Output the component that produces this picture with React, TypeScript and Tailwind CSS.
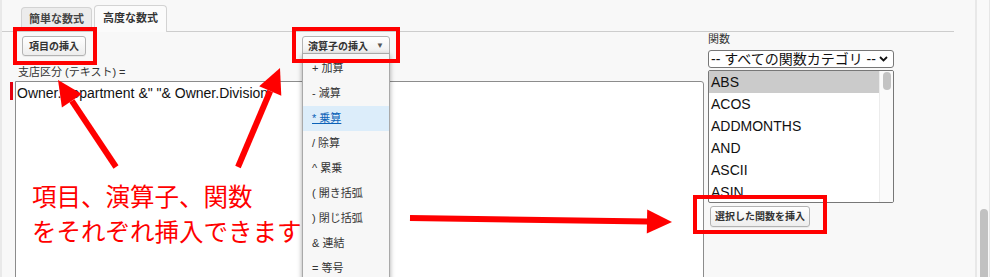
import React from 'react';

const operators = [
  '+ 加算',
  '- 減算',
  '* 乗算',
  '/ 除算',
  '^ 累乗',
  '( 開き括弧',
  ') 閉じ括弧',
  '& 連結',
  '= 等号',
];

const functions = ['ABS', 'ACOS', 'ADDMONTHS', 'AND', 'ASCII', 'ASIN'];

const font = "font-['Liberation_Sans','Noto_Sans_CJK_JP',sans-serif]";

const btn =
  'flex items-center whitespace-nowrap rounded-[3px] border border-[#b3b3b3] bg-linear-to-b from-white to-[#ededed] text-[10px] font-semibold text-[#333] shadow-[0_1px_0_rgba(0,0,0,0.05)]';

const Tabs = () => (
  <div className="flex h-[32px] w-[952px] items-end gap-[2px] border-b border-[#cdcdcd] pl-[19px]">
    <div className="flex h-[24px] w-[71px] items-center justify-center rounded-t-[4px] border border-b-0 border-[#d3d3d3] bg-[#ececec] text-[11px] font-semibold text-[#444]">
      簡単な数式
    </div>
    <div className="-mb-px flex h-[27px] w-[73px] items-center justify-center rounded-t-[4px] border border-b-0 border-[#d3d3d3] bg-[#fbfbfb] pb-[1px] text-[11px] font-semibold text-[#333]">
      高度な数式
    </div>
  </div>
);

const OperatorMenu = () => (
  <div className="absolute left-0 top-[17px] z-20 w-[88px] border border-[#a9a9a9] bg-[#f7f7f7] pt-[1.5px] shadow-[0_2px_5px_rgba(0,0,0,0.35)]">
    {operators.map((op, i) => (
      <div
        key={op}
        className={`flex h-[25px] items-center pl-[9px] text-[11px] ${
          i === 2 ? 'bg-[#dcedfa] text-[#0b62b8] underline' : 'text-[#333]'
        }`}
      >
        {op}
      </div>
    ))}
  </div>
);

const LeftColumn = () => (
  <div className="w-[694px]">
    <div className="mt-[4px] flex h-[20px] pl-[12px]">
      <div className={`${btn} h-[20px] w-[64px] justify-center`}>項目の挿入</div>
      <div className="relative ml-[216px]">
        <div className={`${btn} h-[20px] w-[88px] pl-[5px]`}>
          <span>演算子の挿入</span>
          <span className="ml-[8px] text-[8px] text-[#555]">▼</span>
        </div>
        <OperatorMenu />
      </div>
    </div>
    <div className="mt-[9px] pl-[8px] text-[11px] leading-[14px] text-[#333]">支店区分 (テキスト) =</div>
    <div className="mt-[2px] flex">
      <div className="mt-[1px] h-[18px] w-[3px] bg-[#e3000f]" />
      <div className="ml-[2px] h-[210px] w-[689px] rounded-tr-[3px] border border-[#8c8c8c] bg-white px-[1px] pt-[3px] text-[14px] leading-[17px] text-[#111]">
        Owner.Department &amp;" "&amp; Owner.Division
      </div>
    </div>
  </div>
);

const RightColumn = () => (
  <div className="ml-[4px] w-[186px]">
    <div className="text-[11px] leading-[14px] text-[#333]">関数</div>
    <div className="mt-[4px] flex h-[18px] items-center justify-between rounded-[3px] border border-[#777] bg-white pl-[2px] pr-[5px] text-[14px] text-[#111]">
      <span>-- すべての関数カテゴリ --</span>
      <svg width="9" height="6" viewBox="0 0 9 6">
        <polyline points="1,1 4.5,4.5 8,1" fill="none" stroke="#111" strokeWidth="1.8" />
      </svg>
    </div>
    <div className="mt-[2px] flex h-[133px] overflow-hidden rounded-[2px] border border-[#777] bg-white">
      <div className="flex-1">
        {functions.map((f, i) => (
          <div
            key={f}
            className={`flex h-[22px] items-center pl-[2px] text-[14px] text-[#111] ${i === 0 ? 'bg-[#cbcbcb]' : ''}`}
          >
            {f}
          </div>
        ))}
      </div>
      <div className="w-[14px] border-l border-[#ececec] bg-[#fafafa] pl-[3px] pt-[1px]">
        <div className="h-[18px] w-[8px] rounded-full bg-[#c3c3c3]" />
      </div>
    </div>
    <div className={`${btn} ml-[2px] mt-[3px] h-[21px] w-[100px] justify-center`}>選択した関数を挿入</div>
  </div>
);

const Annotations = () => (
  <>
    <div className="absolute left-[13px] top-[27px] z-30 h-[38px] w-[84px] border-4 border-[#ff0000]" />
    <div className="absolute left-[292px] top-[27px] z-30 h-[36px] w-[108px] border-4 border-[#ff0000]" />
    <div className="absolute left-[693px] top-[195px] z-30 h-[39px] w-[134px] border-4 border-[#ff0000]" />
    <svg className="pointer-events-none absolute left-0 top-0 z-30" width="1003" height="277">
      <line x1="116" y1="167" x2="71.9" y2="100.8" stroke="#ff0000" strokeWidth="6" />
      <polygon points="58,80 81.9,94.1 61.9,107.5" fill="#ff0000" />
      <line x1="238" y1="167" x2="270.2" y2="91" stroke="#ff0000" strokeWidth="6" />
      <polygon points="280,68 281.3,95.7 259.2,86.3" fill="#ff0000" />
      <line x1="410" y1="218" x2="648" y2="221.6" stroke="#ff0000" strokeWidth="6" />
      <polygon points="672,222 647.2,209.6 646.8,233.6" fill="#ff0000" />
    </svg>
    <div className="absolute left-[32px] top-[180px] z-10 text-[24.5px] leading-[35px] text-[#ff0000]">
      <div>項目、演算子、関数</div>
      <div>をそれぞれ挿入できます</div>
    </div>
  </>
);

export default function App() {
  return (
    <div className={`relative flex h-[277px] w-[1003px] overflow-hidden bg-white ${font}`}>
      <div className="h-full w-[975px] border-l-2 border-[#e9e9e9] bg-[#f8f8f8]">
        <Tabs />
        <div className="flex pl-[8px]">
          <LeftColumn />
          <RightColumn />
        </div>
      </div>
      <div className="h-full w-[2px] bg-[#e8e8e8]" />
      <div className="h-full w-[13px] border-r border-[#e6e6e6] bg-[#f9f9f9] pl-[3px] pt-[209px]">
        <div className="h-[90px] w-[8px] rounded-full bg-[#c1c1c1]" />
      </div>
      <Annotations />
    </div>
  );
}
